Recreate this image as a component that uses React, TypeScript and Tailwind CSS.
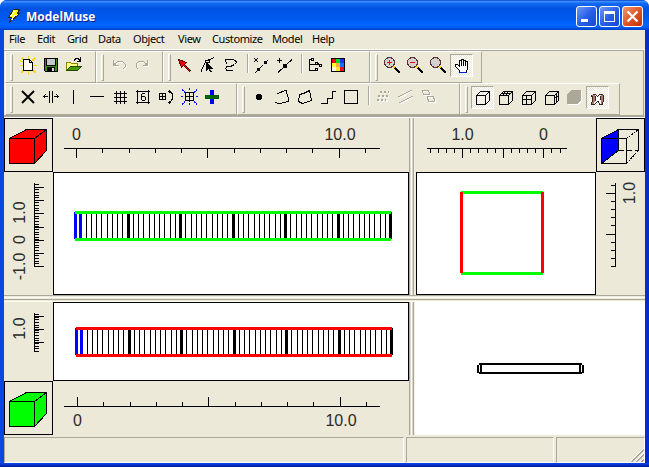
import React from "react";

const K = "#000";
const G = "#aca899";

function Icon({ children, pressed }: { children?: React.ReactNode; pressed?: boolean }) {
  return (
    <div
      className={
        pressed
          ? "h-[23px] w-[23px] shrink-0 border border-t-[#aca899] border-l-[#aca899] border-r-white border-b-white bg-[repeating-conic-gradient(#fff_0_25%,#ece9d8_0_50%)] bg-[length:2px_2px]"
          : "h-[23px] w-[23px] shrink-0"
      }
    >
      <svg width="23" height="23" viewBox="0 0 23 23" fill="none" stroke={K} shapeRendering="crispEdges" className={pressed ? "-mt-px -ml-px block" : "block"}>
        {children}
      </svg>
    </div>
  );
}

function Sep() {
  return (
    <div className="flex h-[19px] w-2 shrink-0 pl-1">
      <div className="ml-px w-px bg-[#aca899]" />
      <div className="w-px bg-white" />
    </div>
  );
}

function Band({ width, pad, grip, children }: { width: string; pad: string; grip: string; children: React.ReactNode }) {
  return (
    <div className={`flex h-full shrink-0 border-r border-b border-r-[#aca899] border-b-[#aca899] border-t border-l border-t-white border-l-white ${width}`}>
      <div className={`mt-[2px] mb-px w-[3px] shrink-0 border-t border-l border-r border-t-white border-l-white border-r-[#aca899] border-b border-b-[#aca899] ${grip}`} />
      <div className={`flex pt-[2px] ${pad}`}>{children}</div>
    </div>
  );
}

function Magnifier({ sign }: { sign?: string }) {
  return (
    <>
      <path d="M13 13l6 6" stroke={K} strokeWidth="2.4" />
      <path d="M12 12l2 2" stroke="#ffd800" strokeWidth="2" />
      <circle cx="8.5" cy="8.5" r="5" fill="#d4d0d0" stroke="#5a3030" />
      {sign === "plus" && <path d="M6 8.500h5M8.500 6v5" stroke="#f00" />}
      {sign === "minus" && <path d="M6 8.500h5" stroke="#f00" />}
    </>
  );
}

const CubeLines = () => <path d="M5.500 9.500h9v9h-9zM5.500 9.500l4-4h9l-4 4M18.500 5.500v9l-4 4" />;

function TopToolbar() {
  return (
    <div className="flex h-8">
      <Band width="w-[91px]" grip="ml-1" pad="ml-1">
        <Icon>
          <path d="M5 4l3 3M18 4l-3 3M11.500 2v4M3 11.500h4M16 11.500h4M4 19l3-3M19 19l-3-3M11.500 17v4M3 7l4 1" stroke="#ffd51c" strokeWidth="1.500" />
          <path d="M6.500 5.500h6l3 3v8h-9z" fill="#fffef0" />
          <path d="M12.500 5.500v3h3" />
        </Icon>
        <Icon>
          <path d="M4.500 4.500h13v13h-12l-1-1z" fill="#3a8a12" />
          <path d="M7 5h8v6H7z" fill="#c4c8cc" stroke="none" />
          <path d="M6.500 5v6.500h9V5M7.500 17v-3.500h7V17" />
          <path d="M8 14h6v4H8z" fill="#000" stroke="none" />
          <path d="M12 14h2v3h-2z" fill="#ddd" stroke="none" />
        </Icon>
        <Icon>
          <path d="M3.500 16.500v-8h4l1 1h6v3" fill="#ffff8c" stroke="#8a8400" />
          <path d="M3.500 16.500l4-4h11l-4 4z" fill="#4a9a08" stroke="#204800" />
          <path d="M11 6.500q3-4 6 0M17.500 3v4h-4" />
        </Icon>
      </Band>
      <Band width="w-[67px]" grip="ml-1" pad="ml-1">
        <Icon>
          <g transform="translate(1 1)" stroke="#fff"><path d="M5.500 6v5.500h5M6 11l4-4h4l3 3v3l-2 2" /></g>
          <path d="M5.500 6v5.500h5M6 11l4-4h4l3 3v3l-2 2M6 9l2 2" stroke={G} />
        </Icon>
        <Icon>
          <g transform="translate(1 1)" stroke="#fff"><path d="M16.500 6v5.500h-5M16 11l-4-4H8l-3 3v3l2 2" /></g>
          <path d="M16.500 6v5.500h-5M16 11l-4-4H8l-3 3v3l2 2M16 9l-2 2" stroke={G} />
        </Icon>
      </Band>
      <Band width="w-[207px]" grip="ml-1" pad="ml-[2px]">
        <Icon>
          <path d="M5.500 5.500l8 3-2 2 6 6-1 1-6-6-2 2z" fill="#f00" stroke="#700000" />
          <path d="M12 11l6 6" />
        </Icon>
        <Icon>
          <path d="M5.500 17.500v-2l2-3 1-3 2-3M11 6.500l3-1 4-2M9 6h4v2H9z" />
          <path d="M10 8l7 7h-3l2 3h-2l-1-3-3 2z" fill="#000" stroke="none" />
        </Icon>
        <Icon>
          <path d="M8 9.500l-1.500-2v-2h7l3 1 1 2-2 2-4 2h-4v1l-1 1 1 1.500h5l1 1" />
        </Icon>
        <Sep />
        <Icon>
          <path d="M4 4l4 4M8 4l-4 4M5 19l3-3M10 14l3-3M14 10l4-4" />
          <path d="M7 14h3v3H7zM14 7h3v3h-3z" fill="#000" stroke="none" />
        </Icon>
        <Icon>
          <path d="M4 6.500h5M6.500 4v5M5 18.500l14-13" />
          <path d="M10 10h4v4h-4z" fill="#000" stroke="none" />
        </Icon>
        <Sep />
        <Icon>
          <path d="M7 5.500H5.500v11H11M5.500 10.500H11M13.500 9.500l2 1M7.500 4.500h2v2h-2zM11.500 8.500h2v2h-2zM15.500 10.500h2v2h-2zM11.500 14.500h2v2h-2z" />
        </Icon>
        <Icon>
          <path d="M4.500 4.500h13v13h-13z" fill="#fff" />
          <g stroke="none">
            <path d="M5 5h4v4H5z" fill="#e80018" /><path d="M9 5h4v4H9z" fill="#00e018" /><path d="M13 5h4v4h-4z" fill="#2030ff" />
            <path d="M5 9h4v4H5z" fill="#ffff28" /><path d="M9 9h4v4H9z" fill="#ffad36" /><path d="M13 9h4v4h-4z" fill="#0878ff" />
            <path d="M5 13h4v4H5z" fill="#f6f6f6" /><path d="M9 13h4v4H9z" fill="#ffe630" /><path d="M13 13h4v4h-4z" fill="#e81020" />
          </g>
        </Icon>
      </Band>
      <Band width="w-[112px]" grip="ml-1" pad="ml-[3px]">
        <Icon><Magnifier sign="plus" /></Icon>
        <Icon><Magnifier sign="minus" /></Icon>
        <Icon><Magnifier /></Icon>
        <Icon pressed>
          <path d="M9.500 18.500v-2l-4-4v-2h2l2 2v-6h2v-1h2v1h2v1h2v7l-1 4z" fill="#fff" />
          <path d="M11.500 6v6M13.500 6v6M15.500 7v5" />
          <path d="M9 18.500h8" stroke="#0020d0" />
        </Icon>
      </Band>
    </div>
  );
}

function GridGlyph() {
  return <path d="M5 7.500h13M5 11.500h13M5 15.500h13M7.500 5v13M11.500 5v13M15.500 5v13" />;
}

function BottomToolbar() {
  return (
    <div className="flex h-8">
      <Band width="w-[232px]" grip="ml-1" pad="ml-1">
        <Icon><path d="M5 5l12 12M17 5L5 17" strokeWidth="1.900" shapeRendering="auto" /></Icon>
        <Icon><path d="M9.500 5v12M12.500 5v12M3 10.500h5M14 10.500h5M3.500 10.500l2-2M3.500 10.500l2 2M18.500 10.500l-2-2M18.500 10.500l-2 2" /></Icon>
        <Icon><path d="M10.500 4v14" /></Icon>
        <Icon><path d="M4 10.500h14" /></Icon>
        <Icon><GridGlyph /></Icon>
        <Icon>
          <path d="M4 5.500h14M4 16.500h14M5.500 4v14M16.500 4v14" />
          <path d="M13 7.500h-3M9.500 8v6M10 14.500h3M13.500 11v3M10 10.500h3" />
        </Icon>
        <Icon>
          <path d="M4.500 7.500h6v6h-6zM7.500 7.500v6M4.500 10.500h6" />
          <path d="M13 5.500h2l2 2v6l-2 3h-2M14.500 4v3M14.500 15v3" />
        </Icon>
        <Icon>
          <path d="M7.500 6.500h8v8h-8zM11.500 6v10M7 10.500h9" />
          <path d="M11.500 2v2M11.500 17v2M3 10.500h2M18 10.500h2M4 3.500l3 3M16 6.500l3-3M4 18.500l3-3M16 15.500l3 3" stroke="#001cff" strokeDasharray="2 1" />
        </Icon>
        <Icon>
          <path d="M9 4h4v14H9z" fill="#0000ff" stroke="none" />
          <path d="M4 9h14v4H4z" fill="#006400" stroke="none" />
        </Icon>
      </Band>
      <Band width="w-[223px]" grip="ml-1" pad="ml-[3px]">
        <Icon><path d="M9 8h4v1h1v4h-1v1H9v-1H8V9h1z" fill="#000" stroke="none" /></Icon>
        <Icon><path d="M6 8l9-4 3 11-10 3-4-2" /></Icon>
        <Icon><path d="M5.500 8.500l4-1 6-3 2 10-9 3-4-2z" /></Icon>
        <Icon><path d="M4 17.500h6v-5h5v-7h4" /></Icon>
        <Icon><path d="M4.500 4.500h13v13h-13z" /></Icon>
        <Sep />
        <Icon>
          <path d="M9 7h10M8 11h10M7 15h10" stroke="#fff" strokeDasharray="2 2" strokeWidth="2" />
          <path d="M9 6h9M7 10h10M6 14h9" stroke={G} strokeDasharray="2 2" strokeWidth="2" />
        </Icon>
        <Icon>
          <path d="M5 12l13-7M6 18l13-7" stroke="#fff" />
          <path d="M4 11l14-7M5 17l14-7" stroke={G} />
        </Icon>
        <Icon>
          <path d="M6 6l6-1 2 4-6 1zM11 12l6-1 2 5-6 1z" stroke="#fff" />
          <path d="M5 5l6-1 2 4-6 1zM10 11l6-1 2 5-6 1z" stroke={G} />
        </Icon>
      </Band>
      <Band width="w-[160px]" grip="ml-1" pad="ml-[3px]">
        <Icon pressed><CubeLines /></Icon>
        <Icon><CubeLines /><path d="M7 7.500h9M11 5l-2 5M14 5l-2 5" /></Icon>
        <Icon><CubeLines /><path d="M5 13.500h9M9.500 9v9" /></Icon>
        <Icon><CubeLines /><path d="M16.500 7v9M14 13l5-4" /></Icon>
        <Icon>
          <path d="M5 18v-9l4-4h10v10l-4 4H5z" fill="#fff" stroke="none" />
          <path d="M4 17V8l4-4h10v10l-4 4H4z" fill={G} stroke="none" />
        </Icon>
        <Icon pressed>
          <path d="M5 9h4l3 2 2-2h4v9h-3l-3-3-3 3H5z" fill="#fff" stroke="none" />
          <path d="M6 9h3v5l-1 4H6l1-5zM15 9h2l1 4-1 5h-2z" fill="#a87c70" stroke="none" />
          <path d="M6.500 8.500h3l2 2 2-2h3l1 1v4l-1 5h-3l-1-3h-1l-3 3h-3l1-5v-2l-1-2M9.500 10v5M14.500 10v4" stroke="#3c2420" />
        </Icon>
      </Band>
    </div>
  );
}

function ViewCube({ fill, wire }: { fill: string; wire?: boolean }) {
  return (
    <div className="h-[54px] w-[49px] shrink-0 border border-black">
      <svg viewBox="1 1 47 52" width="47" height="52" fill="none" stroke={K} shapeRendering="crispEdges" className="block">
        {wire ? (
          <>
            <path d="M5.500 20.500l17-9v21l-17 13z" fill={fill} />
            <path d="M22.500 11.500h20v21M5.500 20.500h25v25h-25z" />
            <path d="M30.500 20.500l12-9M30.500 45.500l12-13" strokeDasharray="2 1" />
            <path d="M22.500 32.500h20" strokeDasharray="5 3" />
          </>
        ) : (
          <>
            <path d="M5.500 20.500l17-9h20v21l-12 13h-25z" fill={fill} />
            <path d="M5.500 20.500h25v25M30.500 20.500l12-9" />
          </>
        )}
      </svg>
    </div>
  );
}

/* Column ruler; x coordinates are window pixels */
function HRuler({ majors, minors, from, to, labels, up }: { majors: number[]; minors: number[]; from: number; to: number; labels: [number, string][]; up?: boolean }) {
  const y = up ? 25 : 30;
  const left = from < 100 ? 53 : 416;
  const width = from < 100 ? 356 : 180;
  return (
    <svg width={width} height="54" viewBox={`${left} 0 ${width} 54`} className="block shrink-0">
      <g shapeRendering="crispEdges">
        <rect x={from} y={y} width={to - from} height="1" />
        {majors.map((x) => <rect key={x} x={x} y={up ? y - 9 : y} width="1" height="10" />)}
        {minors.map((x) => <rect key={x} x={x} y={up ? y - 4 : y} width="1" height="5" />)}
      </g>
      {labels.map(([x, t]) => (
        <text key={t} x={x} y={up ? 45 : 22} textAnchor="middle" fill="#2c2c28" className="font-['Liberation_Sans',sans-serif] text-[16px]">{t}</text>
      ))}
    </svg>
  );
}

function VRuler({ top, height, axis, from, to, majors, minors, labels, mirror }: { top: number; height: number; axis: number; from: number; to: number; majors: number[]; minors: number[]; labels: [number, string][]; mirror?: boolean }) {
  const base = mirror ? 635 : 25;
  return (
    <svg width="49" height={height} viewBox={`${mirror ? 596 : 4} ${top} 49 ${height}`} className="block shrink-0">
      <g shapeRendering="crispEdges">
        <rect x={axis} y={from} width="1" height={to - from} />
        {majors.map((y) => <rect key={y} x={mirror ? axis - 9 : axis} y={y} width="10" height="1" />)}
        {minors.map((y) => <rect key={y} x={mirror ? axis - 4 : axis} y={y} width="5" height="1" />)}
      </g>
      {labels.map(([y, t]) => (
        <text key={t} transform={`translate(${base} ${y}) rotate(-90)`} textAnchor="middle" fill="#2c2c28" className="font-['Liberation_Sans',sans-serif] text-[16px]">{t}</text>
      ))}
    </svg>
  );
}

function ModelGrid({ x, y, color }: { x: number; y: number; color: string }) {
  const lines = Array.from({ length: 61 }, (_, k) => k);
  return (
    <g shapeRendering="crispEdges">
      {lines.map((k) => {
        const px = Math.floor(x + 0.5 + k * 5.25);
        if (k < 2) return <rect key={k} x={x - 1 + k * 5} y={y + 1} width="3" height="27" fill="#00f" />;
        if (k % 10 === 0) return <rect key={k} x={px - 1} y={y + 1} width="3" height="27" />;
        return <rect key={k} x={px} y={y + 3} width="1" height="24" />;
      })}
      <rect x={x} y={y} width="316" height="3" fill={color} />
      <rect x={x} y={y + 27} width="316" height="3" fill={color} />
    </g>
  );
}

function VSplit() {
  return (
    <div className="flex h-full w-[6px] shrink-0">
      <div className="w-px bg-[#aca899]" />
      <div className="w-px bg-[#e0ddd0]" />
      <div className="w-px bg-white" />
      <div className="w-px bg-[#d8d5c8]" />
      <div className="w-px bg-[#aca899]" />
      <div className="w-px bg-[#f1efe2]" />
    </div>
  );
}

const minorTicks = (start: number, end: number) =>
  Array.from({ length: Math.floor((end - start) / 2.64) + 1 }, (_, i) => Math.round(start + i * 2.64));

function Menu({ w, children }: { w: string; children: string }) {
  return <span className={`${w} shrink-0 whitespace-nowrap`}>{children}</span>;
}

export default function App() {
  return (
    <div className="flex h-[467px] w-[649px] flex-col overflow-hidden rounded-t-[7px] bg-[#0842d8] font-['Noto_Sans',sans-serif] text-black">
      <header className="flex h-[30px] shrink-0 items-center bg-[linear-gradient(180deg,#0842c8_0,#3c8cff_5%,#1268f2_12%,#0054e3_28%,#0058ee_60%,#0066ff_82%,#005bf0_92%,#003cc0_100%)] pr-[6px] pl-[6px]">
        <svg width="16" height="16" viewBox="0 0 16 16" className="mt-px shrink-0" shapeRendering="crispEdges">
          <path d="M7.500 1.500h6l-2 4h2L3.500 14.500l2-5H2.500z" fill="#ffff20" stroke="#302800" />
          <path d="M8.500 3l-4 5M9 7.500l-3 4" stroke="#fff" />
        </svg>
        <h1 className="mt-[3px] ml-1 font-['Open_Sans',sans-serif] text-[12px] leading-5 font-bold whitespace-nowrap text-white [text-shadow:1px_1px_#0a1883]">
          ModelMuse
        </h1>
        <div className="mt-[3px] ml-auto flex gap-[2px]">
          <div className="h-[21px] w-[21px] rounded-[3px] border border-white bg-[linear-gradient(135deg,#7198f2,#2860e8_50%,#1648d0)]">
            <svg width="19" height="19"><rect x="4" y="12" width="7" height="3" fill="#fff" /></svg>
          </div>
          <div className="h-[21px] w-[21px] rounded-[3px] border border-white bg-[linear-gradient(135deg,#7198f2,#2860e8_50%,#1648d0)]">
            <svg width="19" height="19" shapeRendering="crispEdges"><path d="M4.500 4v10.500h10V4" fill="none" stroke="#fff" /><rect x="4" y="4" width="11" height="3" fill="#fff" /></svg>
          </div>
          <div className="h-[21px] w-[21px] rounded-[3px] border border-white bg-[linear-gradient(135deg,#ee9870,#e05828_50%,#c82c08)]">
            <svg width="19" height="19"><path d="M4.500 4.500l10 10M14.500 4.500l-10 10" stroke="#fff" strokeWidth="2.200" /></svg>
          </div>
        </div>
      </header>

      <div className="flex h-[433px] w-full flex-col border-r-4 border-l-4 border-r-[#0030c8] border-l-[#0848e0] bg-[#ece9d8]">
        <nav className="flex h-[19px] shrink-0 pl-[5px] text-[11px] leading-[18px] tracking-[-0.4px]">
          <Menu w="w-7">File</Menu>
          <Menu w="w-[30px]">Edit</Menu>
          <Menu w="w-[31px]">Grid</Menu>
          <Menu w="w-[35px]">Data</Menu>
          <Menu w="w-[45px]">Object</Menu>
          <Menu w="w-[34px]">View</Menu>
          <Menu w="w-[60px]">Customize</Menu>
          <Menu w="w-10">Model</Menu>
          <Menu w="w-8">Help</Menu>
        </nav>

        <div className="h-[69px] shrink-0 border-t border-b border-white">
          <div className="h-[67px] w-[640px] border-t border-r border-b-2 border-[#aca899] pl-px">
            <TopToolbar />
            <BottomToolbar />
          </div>
        </div>

        <div className="flex h-[177px] shrink-0">
          <section className="w-[405px] shrink-0">
            <div className="flex">
              <ViewCube fill="#f00" />
              <HRuler from={64} to={380} majors={[76, 207, 339]} minors={[102, 129, 155, 181, 234, 260, 286, 312, 365]} labels={[[76.5, "0"], [340, "10.0"]]} />
            </div>
            <div className="flex">
              <VRuler top={172} height={123} axis={34} from={183} to={267} majors={[187, 200, 213, 227, 240, 253, 266]} minors={minorTicks(184, 266)} labels={[[212.5, "1.0"], [239.5, "0"], [266.5, "-1.0"]]} />
              <div className="h-[123px] w-[356px] border border-black bg-white">
                <svg width="354" height="121" viewBox="54 173 354 121" className="block"><ModelGrid x={75} y={211} color="#0f0" /></svg>
              </div>
            </div>
          </section>
          <VSplit />
          <section className="ml-px w-[229px] shrink-0">
            <div className="flex">
              <HRuler from={427} to={567} majors={[462, 503, 543]} minors={[430, 438, 446, 454, 470, 478, 487, 495, 511, 519, 527, 535, 551, 560]} labels={[[462.5, "1.0"], [543.5, "0"]]} />
              <ViewCube fill="#00f" wire />
            </div>
            <div className="flex">
              <div className="h-[123px] w-[180px] border border-black bg-white">
                <svg width="178" height="121" viewBox="417 173 178 121" className="block" shapeRendering="crispEdges">
                  <path d="M461 192.500h82M461 273.500h82" stroke="#0f0" strokeWidth="3" />
                  <path d="M461.500 192v81M542.500 192v81" stroke="#f00" strokeWidth="3" />
                </svg>
              </div>
              <VRuler mirror top={172} height={123} axis={615} from={183} to={267} majors={[193, 234]} minors={[185, 201, 209, 217, 225, 242, 250, 258, 266]} labels={[[193, "1.0"]]} />
            </div>
          </section>
        </div>

        <div className="flex h-[7px] shrink-0 flex-col">
          <div className="h-px bg-[#aca899]" />
          <div className="h-px bg-[#ece9d8]" />
          <div className="h-px bg-white" />
          <div className="h-px bg-[#ece9d8]" />
          <div className="h-px bg-[#aca899]" />
          <div className="h-px bg-[#ece9d8]" />
          <div className="h-px bg-[#fffdf5]" />
        </div>

        <div className="flex h-[133px] shrink-0">
          <section className="w-[405px] shrink-0">
            <div className="flex">
              <VRuler top={302} height={79} axis={34} from={313} to={351} majors={[316, 329, 342]} minors={minorTicks(314, 351)} labels={[[328.5, "1.0"]]} />
              <div className="h-[79px] w-[356px] border border-black bg-white">
                <svg width="354" height="77" viewBox="54 303 354 77" className="block"><ModelGrid x={76} y={327} color="#f00" /></svg>
              </div>
            </div>
            <div className="flex">
              <ViewCube fill="#0f0" />
              <HRuler up from={64} to={380} majors={[77, 208, 340]} minors={[103, 130, 156, 182, 235, 261, 287, 313, 366]} labels={[[77.500, "0"], [341, "10.0"]]} />
            </div>
          </section>
          <VSplit />
          <div className="w-[230px] bg-white">
            <svg width="230" height="133" viewBox="415 302 230 133" fill="none" stroke={K} strokeWidth="2" className="block" shapeRendering="crispEdges">
              <path d="M479 364h103M479 373h103M478 365v8M583 365v8M481 364v9M580 364v9" />
            </svg>
          </div>
        </div>

        <footer className="flex h-7 shrink-0 gap-[2px] pt-[2px]">
          <div className="w-[400px] border border-t-[#aca899] border-l-[#aca899] border-r-white border-b-white" />
          <div className="w-[148px] border border-t-[#aca899] border-l-[#aca899] border-r-white border-b-white" />
          <div className="flex w-[89px] items-end justify-end border border-t-[#aca899] border-l-[#aca899] border-r-white border-b-white">
            <svg width="14" height="14" shapeRendering="crispEdges" className="block">
              <path d="M0 14L14 0M5 14l9-9M10 14l4-4" stroke="#fff" />
              <path d="M1.500 14L14 1.500M6.500 14L14 6.500M11.500 14l2.500-2.500" stroke={G} strokeWidth="2" />
            </svg>
          </div>
        </footer>
      </div>
      <div className="h-1 shrink-0 bg-[linear-gradient(180deg,#0848e8,#0838d0_40%,#001890)]" />
    </div>
  );
}
